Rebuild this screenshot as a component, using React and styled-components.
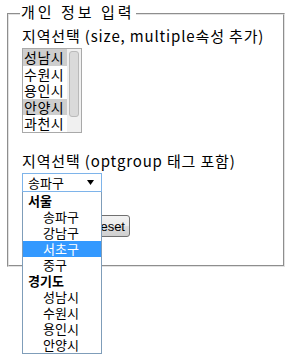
import React from 'react';
import styled, { createGlobalStyle } from 'styled-components';

const GlobalStyle = createGlobalStyle`
  html, body {
    margin: 0;
    min-height: 100%;
    background: #fff;
    font-family: "Noto Sans CJK KR", "Noto Sans", sans-serif;
    color: #000;
  }
`;

const Page = styled.div`
  min-height: 100vh;
  box-sizing: border-box;
  padding: 13px 5px 0 7px;
`;

const Frame = styled.div`
  padding: 0 13px 28px 13px;
  border: 2px groove #e2e2e2;
`;

const Legend = styled.div`
  width: fit-content;
  margin: -13px 0 0 -2px;
  padding: 0 1px;
  background: #fff;
  font-size: 15px;
  line-height: 20px;
  letter-spacing: 3px;
`;

const Label = styled.div`
  font-size: 15px;
  line-height: 18px;
  margin-top: ${(p) => p.$gap || 0}px;
  letter-spacing: 0.85px;
  white-space: nowrap;
`;

const ListBox = styled.div`
  margin-top: 3px;
  width: 58px;
  height: 83px;
  border: 1px solid #a9a9a9;
  display: flex;
  overflow: hidden;
`;

const ListOptions = styled.div`
  flex: 1;
`;

const ListOption = styled.div`
  font-size: 14px;
  line-height: 16.6px;
  padding-left: 1px;
  letter-spacing: 0.5px;
  background: ${(p) => (p.$selected ? '#cecece' : 'transparent')};
`;

const ScrollTrack = styled.div`
  width: 14px;
  background: #f0f0f0;
  padding: 2px;
  box-sizing: border-box;
`;

const ScrollThumb = styled.div`
  height: 66px;
  background: #dadada;
  border: 1px solid #bababa;
  border-radius: 3px;
  box-sizing: border-box;
`;

const SelectWrap = styled.div`
  position: relative;
  margin-top: 3px;
  width: 80px;
`;

const SelectBox = styled.div`
  height: 19px;
  box-sizing: border-box;
  border: 1px solid #7eb4ea;
  display: flex;
  align-items: center;
  justify-content: space-between;
  padding: 0 7px 0 5px;
  font-size: 13px;
`;

const Dropdown = styled.div`
  position: absolute;
  top: 19px;
  left: 0;
  width: 80px;
  box-sizing: border-box;
  border: 1px solid #7f9db9;
  border-top: none;
  background: #fff;
  padding: 1px 0 0;
  z-index: 2;
`;

const GroupLabel = styled.div`
  font-size: 13px;
  font-weight: bold;
  line-height: 16px;
  padding-left: 5px;
`;

const DropOption = styled.div`
  font-size: 13px;
  line-height: 16px;
  padding-left: 20px;
  background: ${(p) => (p.$active ? '#3399ff' : 'transparent')};
  color: ${(p) => (p.$active ? '#fff' : '#000')};
`;

const ButtonRow = styled.div`
  margin-top: 23px;
  display: flex;
  gap: 4px;
`;

const Button = styled.button`
  width: ${(p) => p.$width}px;
  height: 22px;
  padding: 0;
  font-family: "Liberation Sans", Arial, sans-serif;
  font-size: 13px;
  color: #000;
  border: 1px solid #707070;
  border-radius: 3px;
  background: linear-gradient(#f2f2f2, #ebebeb 50%, #dddddd 51%, #cfcfcf);
`;

const cities = [
  { name: '성남시', selected: true },
  { name: '수원시' },
  { name: '용인시' },
  { name: '안양시', selected: true },
  { name: '과천시' },
];

const groups = [
  { label: '서울', items: ['송파구', '강남구', '서초구', '중구'] },
  { label: '경기도', items: ['성남시', '수원시', '용인시', '안양시'] },
];

function Arrow() {
  return (
    <svg width="7" height="5" viewBox="0 0 7 5">
      <path d="M0 0 H7 L3.5 5 Z" fill="#000" />
    </svg>
  );
}

export default function App() {
  return (
    <Page>
      <GlobalStyle />
      <Frame>
        <Legend>개인 정보 입력</Legend>
        <Label $gap={5}>지역선택 (size, multiple속성 추가)</Label>
        <ListBox>
          <ListOptions>
            {cities.map((c) => (
              <ListOption key={c.name} $selected={c.selected}>
                {c.name}
              </ListOption>
            ))}
          </ListOptions>
          <ScrollTrack>
            <ScrollThumb />
          </ScrollTrack>
        </ListBox>
        <Label $gap={19}>지역선택 (optgroup 태그 포함)</Label>
        <SelectWrap>
          <SelectBox>
            송파구
            <Arrow />
          </SelectBox>
          <Dropdown>
            {groups.map((g) => (
              <div key={g.label}>
                <GroupLabel>{g.label}</GroupLabel>
                {g.items.map((it) => (
                  <DropOption key={it} $active={it === '서초구'}>
                    {it}
                  </DropOption>
                ))}
              </div>
            ))}
          </Dropdown>
        </SelectWrap>
        <ButtonRow>
          <Button $width={60}>전송</Button>
          <Button $width={44}>Reset</Button>
        </ButtonRow>
      </Frame>
    </Page>
  );
}
